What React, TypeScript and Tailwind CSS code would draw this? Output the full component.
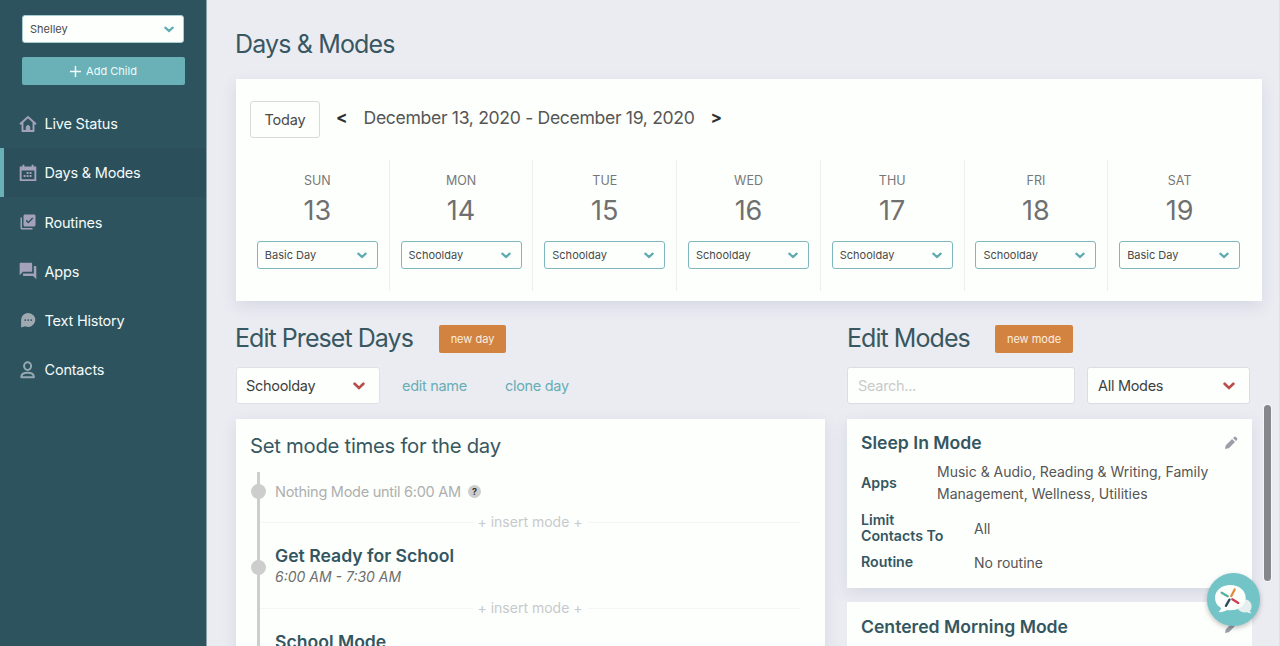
import type { ReactNode } from "react"
import { BiSolidPencil } from "react-icons/bi"
import { MdForum, MdLibraryAddCheck } from "react-icons/md"

interface NavItem {
  label: string
  icon: ReactNode
  active?: boolean
}

function HomeIcon() {
  return (
    <svg viewBox="0 0 18 18" className="h-[18px] w-[18px]" fill="none" stroke="currentColor" strokeWidth="1.9">
      <path d="M1 9.2 9 2l8 7.200M3.500 7.500v8.500h11V7.500" strokeLinejoin="round" />
      <path d="M7.200 16v-3.600a1.800 1.800 0 0 1 3.600 0V16z" fill="currentColor" strokeWidth="1" />
    </svg>
  )
}

function CalendarIcon() {
  return (
    <svg viewBox="0 0 18 18" className="h-[18px] w-[18px]" fill="currentColor">
      <path
        fillRule="evenodd"
        d="M.7 2.600h2.700V.7h2v1.900h7.200V.7h2v1.900h2.700v14.500H.7zm1.900 4v8.600h12.800V6.600z"
      />
      <path d="M7.600 8h1.900v1.900H7.600zm3 0h1.900v1.900h-1.900zm-6 3.100h1.900V13H4.600zm3 0h1.900V13H7.600zm3 0h1.900V13h-1.900z" />
    </svg>
  )
}

function ChatIcon() {
  return (
    <svg viewBox="0 0 18 18" className="h-[18px] w-[18px] text-[#9fa9b1]">
      <path d="M9.200 2a7 7 0 1 1-3 13.300L2.100 16.400V9A7 7 0 0 1 9.200 2z" fill="currentColor" />
      <g fill="#2d535e">
        <circle cx="6.2" cy="9.1" r=".9" />
        <circle cx="9.2" cy="9.1" r=".9" />
        <circle cx="12.2" cy="9.1" r=".9" />
      </g>
    </svg>
  )
}

function PersonIcon() {
  return (
    <svg
      viewBox="0 0 18 18"
      className="h-[18px] w-[18px] text-[#94a8b0]"
      fill="none"
      stroke="currentColor"
      strokeWidth="2"
    >
      <ellipse cx="8.6" cy="5.1" rx="3.5" ry="3.8" />
      <path d="M2.300 16.200c0-3.200 2-4.400 6.300-4.400s6.300 1.200 6.300 4.400z" strokeLinejoin="round" />
    </svg>
  )
}

const navItems: NavItem[] = [
  { label: "Live Status", icon: <HomeIcon /> },
  { label: "Days & Modes", icon: <CalendarIcon />, active: true },
  { label: "Routines", icon: <MdLibraryAddCheck className="h-[18px] w-[18px] shrink-0" /> },
  { label: "Apps", icon: <MdForum className="h-5 w-5 shrink-0" /> },
  { label: "Text History", icon: <ChatIcon /> },
  { label: "Contacts", icon: <PersonIcon /> },
]

const days = [
  { name: "SUN", date: 13, preset: "Basic Day" },
  { name: "MON", date: 14, preset: "Schoolday" },
  { name: "TUE", date: 15, preset: "Schoolday" },
  { name: "WED", date: 16, preset: "Schoolday" },
  { name: "THU", date: 17, preset: "Schoolday" },
  { name: "FRI", date: 18, preset: "Schoolday" },
  { name: "SAT", date: 19, preset: "Basic Day" },
]

function Chevron({ className }: { className: string }) {
  return (
    <svg viewBox="0 0 12 8" className={className} fill="none" stroke="currentColor" strokeWidth="2.7" strokeLinecap="round">
      <path d="M1.600 1.800 6 5.900l4.400-4.100" />
    </svg>
  )
}

function Sidebar() {
  return (
    <aside className="h-full w-[207px] shrink-0 border-r border-[#8d9fa9] bg-[#2d535e] pt-[15px]">
      <div className="ml-[22px] flex h-7 w-[162px] items-center justify-between rounded-[3px] border border-[#a9cdd1] bg-[#fdfffc] pr-[9px] pl-[7px] text-[11px] text-[#4a4a4a]">
        Shelley
        <Chevron className="h-[7px] w-[10px] text-[#5fabb1]" />
      </div>
      <button className="mt-[14px] ml-[22px] flex h-7 w-[163px] items-center justify-center gap-[5px] rounded-[2px] bg-[#69b1b7] text-[11px] text-[#f2fbfb]">
        <svg viewBox="0 0 11 11" className="h-[11px] w-[11px]" stroke="currentColor" strokeWidth="1.5">
          <path d="M5.500 0v11M0 5.500h11" />
        </svg>
        Add Child
      </button>
      <nav className="mt-[14px]">
        {navItems.map((item) => (
          <div
            key={item.label}
            className={
              item.active
                ? "flex h-[49.2px] items-center border-l-4 border-[#69b1b7] bg-[#2b4f5b] pl-[15px]"
                : "flex h-[49.2px] items-center pl-[19px]"
            }
          >
            <span className="flex w-[18px] justify-center text-[#a3a2ba]">{item.icon}</span>
            <span className="ml-[7.5px] pt-px text-[14.5px] tracking-[-0.2px] text-[#f4fbfa]">{item.label}</span>
          </div>
        ))}
      </nav>
    </aside>
  )
}

function WeekCard() {
  return (
    <section className="mt-[19px] h-[222px] w-[1026px] bg-[#fdfffc] pt-[22px] shadow-[0_5px_14px_rgba(80,85,120,0.13)]">
      <div className="flex h-[37px] items-center pl-[14px]">
        <button className="h-[37px] w-[70px] rounded-[3px] border border-[#d9dada] text-[14.5px] tracking-[-0.2px] text-[#4a4a4a]">
          Today
        </button>
        <span className="-mt-[4px] ml-4 text-[17px] leading-none font-bold text-[#2e2e2e]">&lt;</span>
        <span className="-mt-[3px] ml-[16px] w-[331px] text-[17.6px] tracking-[-0.33px] whitespace-nowrap text-[#565656]">
          December 13, 2020 - December 19, 2020
        </span>
        <span className="-mt-[4px] ml-4 text-[17px] leading-none font-bold text-[#2e2e2e]">&gt;</span>
      </div>
      <div className="mt-[22px] ml-[10px] grid w-[1006px] grid-cols-7">
        {days.map((day) => (
          <div
            key={day.name}
            className="flex h-[131px] flex-col items-center border-r border-[#edeeee] pt-[13px] last:border-transparent"
          >
            <div className="text-[12.5px] leading-4 text-[#777]">{day.name}</div>
            <div className="mt-[6px] text-[27px] leading-8 text-[#707070]">{day.date}</div>
            <div className="mt-[14px] flex h-7 w-[121px] items-center justify-between rounded-[3px] border border-[#7fb7bf] pr-[10px] pl-[7px] text-[11px] text-[#4a4a4a]">
              {day.preset}
              <Chevron className="h-[7px] w-[10px] text-[#5fabb1]" />
            </div>
          </div>
        ))}
      </div>
    </section>
  )
}

function InsertMode() {
  return (
    <div className="flex h-5 w-[540px] items-center text-[14px] text-[#c7c9cc]">
      <span className="mt-[3px] h-px flex-1 bg-[#f4f6f5]" />
      <span className="px-[5px]">+ insert mode +</span>
      <span className="mt-[3px] h-px flex-1 bg-[#f4f6f5]" />
    </div>
  )
}

function Dot({ className }: { className: string }) {
  return <span className={`absolute -left-[9px] h-[15px] w-[15px] rounded-full bg-[#cccdcc] ${className}`} />
}

function PresetDays() {
  return (
    <section className="w-[589px]">
      <div className="flex h-[28px] items-center">
        <h2 className="w-[203px] text-[25px] tracking-[-0.95px] text-[#385761]">
          <span className="-ml-px">Edit Preset Days</span>
        </h2>
        <button className="h-7 w-[67px] rounded-[2px] bg-[#d1833f] text-[11px] text-[#fbeee0]">new day</button>
      </div>
      <div className="mt-[14px] flex h-[37px] items-center text-[14.5px] tracking-[-0.3px] text-[#68adb5]">
        <div className="flex h-[37px] w-[144px] items-center justify-between rounded-[3px] border border-[#e0e1e6] bg-[#fdfffc] pr-[14px] pl-[9px] text-[#3f3f3f]">
          Schoolday
          <Chevron className="h-2 w-3 text-[#b84e4a]" />
        </div>
        <span className="ml-[22px] w-[103px] pt-px">edit name</span>
        <span className="pt-px">clone day</span>
      </div>
      <div className="mt-[15px] h-[260px] bg-[#fdfffc] pt-[14px] pl-[14px] shadow-[0_5px_14px_rgba(80,85,120,0.13)]">
        <h3 className="text-[20.3px] leading-[26px] tracking-[-0.28px] text-[#385761]">Set mode times for the day</h3>
        <div className="relative mt-[13px] ml-[7px] h-[220px] border-l-[3px] border-[#cccdcc]">
          <Dot className="top-[12px]" />
          <div className="flex h-[39px] items-center pl-[15px] text-[14.5px] tracking-[-0.27px] text-[#adafaf]">
            Nothing Mode until 6:00 AM
            <span className="ml-[7px] flex h-[13px] w-[13px] items-center justify-center rounded-full bg-[#cccdcc] text-[9px] font-bold text-[#333]">
              ?
            </span>
          </div>
          <InsertMode />
          <Dot className="top-[88px]" />
          <div className="h-[66px] pt-[14px] pl-[15px]">
            <div className="text-[17.6px] leading-[22px] font-semibold text-[#345661]">Get Ready for School</div>
            <div className="text-[14px] leading-5 text-[#6e6e6e] italic">6:00 AM - 7:30 AM</div>
          </div>
          <InsertMode />
          <Dot className="top-[174px]" />
          <div className="pt-[14px] pl-[15px] text-[17.6px] leading-[22px] font-semibold text-[#345661]">School Mode</div>
        </div>
      </div>
    </section>
  )
}

function ModeRow({ label, value, className }: { label: string; value: string; className: string }) {
  return (
    <div className={`flex items-center ${className}`}>
      <div className="w-[113px] pr-7 text-[14.2px] leading-4 font-semibold text-[#345661]">{label}</div>
      <div className="text-[14px] text-[#565656]">{value}</div>
    </div>
  )
}

function Modes() {
  return (
    <section className="ml-[22px] w-[405px]">
      <div className="flex h-[28px] items-center">
        <h2 className="w-[148px] text-[25px] tracking-[-0.95px] text-[#385761]">Edit Modes</h2>
        <button className="h-7 w-[78px] rounded-[2px] bg-[#d1833f] text-[11px] text-[#fbeee0]">new mode</button>
      </div>
      <div className="mt-[14px] flex h-[37px] gap-3 text-[14.5px] tracking-[-0.3px]">
        <input
          placeholder="Search..."
          className="h-[37px] w-[228px] rounded-[3px] border border-[#dcdde3] bg-[#fdfffc] px-[10px] placeholder:text-[#c9cbcb]"
        />
        <div className="flex w-[163px] items-center justify-between rounded-[3px] border border-[#dcdde3] bg-[#fdfffc] pr-[14px] pl-[10px] text-[#3f3f3f]">
          All Modes
          <Chevron className="h-2 w-3 text-[#b84e4a]" />
        </div>
      </div>
      <article className="mt-[15px] h-[169px] bg-[#fdfffc] pt-[13px] pl-[14px] shadow-[0_5px_14px_rgba(80,85,120,0.13)]">
        <div className="flex h-[22px] items-center justify-between pr-[13px]">
          <h3 className="text-[17.6px] font-semibold text-[#345661]">Sleep In Mode</h3>
          <BiSolidPencil className="h-4 w-4 text-[#9c9fa8]" />
        </div>
        <div className="mt-[7px] flex items-center">
          <div className="w-[76px] text-[14.2px] font-semibold text-[#345661]">Apps</div>
          <div className="w-[290px] text-[14px] leading-[22px] text-[#565656]">
            Music &amp; Audio, Reading &amp; Writing, Family Management, Wellness, Utilities
          </div>
        </div>
        <ModeRow label="Limit Contacts To" value="All" className="mt-[7px] h-8" />
        <ModeRow label="Routine" value="No routine" className="mt-2 h-5" />
      </article>
      <article className="mt-[14px] h-[100px] bg-[#fdfffc] pt-[14px] pl-[14px]">
        <div className="flex h-[22px] items-center justify-between pr-[13px]">
          <h3 className="text-[17.6px] font-semibold text-[#345661]">Centered Morning Mode</h3>
          <BiSolidPencil className="h-4 w-4 text-[#9c9fa8]" />
        </div>
      </article>
    </section>
  )
}

function ChatLauncher() {
  return (
    <div className="absolute top-[573px] left-[1207px] h-[53px] w-[53px] rounded-full bg-[#72c4c6] shadow-[0_2px_5px_rgba(0,0,0,0.25)]">
      <svg viewBox="0 0 53 53" className="h-full w-full">
        <path
          d="M38.500 26.500c4 .5 6.300 3.700 6.100 7-.1 2-.8 3.200-1.600 4.200.1 1.200.9 2 1.900 2.500-2 .2-3.600-.1-4.900-.9-4.200.5-7.600-.9-9.300-3.600z"
          fill="#e6eeee"
        />
        <path
          d="M23.300 12c8.700 0 15.400 5.500 15.400 12.700S32 37.300 23.300 37.300c-1.200 0-2.400-.1-3.500-.3-2.300 1.700-5.300 2.400-8.700 2.100 1.500-.8 2.600-2.200 3-4.100C10.300 32.700 8 29 8 24.700 8 17.500 14.600 12 23.300 12z"
          fill="#fdfffc"
        />
        <g strokeWidth="2.3" strokeLinecap="round">
          <path d="m14.700 19.700 6 3.500" stroke="#55b39c" />
          <path d="m27.700 16.500-3.400 6.500" stroke="#e48a3c" />
          <path d="m25.300 26.200 6 3.700" stroke="#cf3e50" />
          <path d="m22.500 26.600-3.600 6.200" stroke="#294b5b" />
        </g>
      </svg>
    </div>
  )
}

export default function App() {
  return (
    <div className="relative flex h-[646px] w-[1280px] overflow-hidden bg-[#ebecf2] font-['Inter',sans-serif]">
      <Sidebar />
      <main className="h-full w-[1073px] border-r border-[#e0e1e8] pt-[28px] pl-[29px]">
        <h1 className="-ml-px h-8 text-[25px] leading-8 tracking-[-0.85px] text-[#385761]">Days &amp; Modes</h1>
        <WeekCard />
        <div className="mt-[24px] flex">
          <PresetDays />
          <Modes />
        </div>
      </main>
      <div className="absolute top-[405px] left-[1264px] h-[176px] w-[7px] rounded-full bg-[#85878c] shadow-[0_0_0_1px_#f6f6fa]" />
      <ChatLauncher />
    </div>
  )
}
